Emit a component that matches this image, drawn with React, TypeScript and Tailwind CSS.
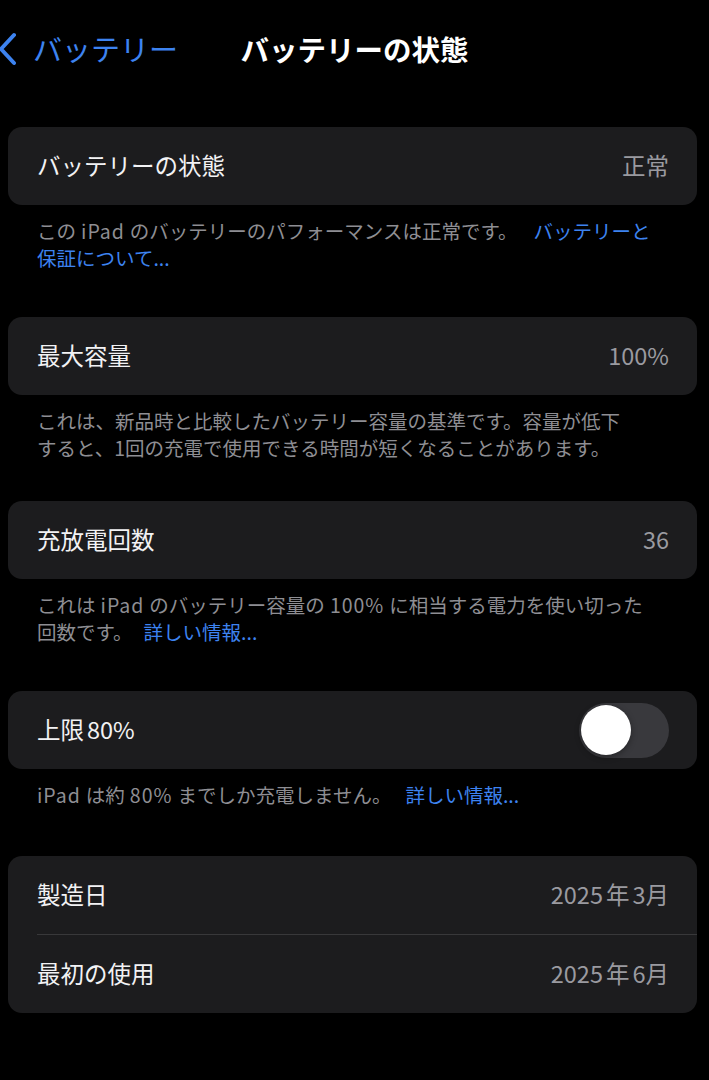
import React from "react";

const font = { fontFamily: '"Noto Sans CJK JP", "Noto Sans", sans-serif' };

function Row({ label, value, children }: { label: React.ReactNode; value?: React.ReactNode; children?: React.ReactNode }) {
  return (
    <div className="flex h-[78px] items-center justify-between pl-[29px] pr-[28px]">
      <span className="text-[23.5px] text-[#f2f2f4]">{label}</span>
      {value && <span className="text-[23.5px] text-[#9a9aa0]">{value}</span>}
      {children}
    </div>
  );
}

function Footer({ children }: { children: React.ReactNode }) {
  return (
    <p className="px-[29px] pt-[13px] text-[19.5px] leading-[26.5px] text-[#8e8e93]">{children}</p>
  );
}

function Link({ children, className = "" }: { children: React.ReactNode; className?: string }) {
  return <span className={"text-[#3d83f0] " + className}>{children}</span>;
}

// latin words inside japanese text get some air, like iOS does
function En({ children }: { children: React.ReactNode }) {
  return <span className="mx-[5px] tracking-[1px]">{children}</span>;
}

function Sm({ children }: { children: React.ReactNode }) {
  return <span className="mx-[3px]">{children}</span>;
}

function Toggle() {
  return (
    <div className="flex h-[55px] w-[90px] items-center rounded-full bg-[#39393d] px-[2px]">
      <div className="h-[50px] w-[50px] rounded-full bg-white shadow-[0_2px_6px_rgba(0,0,0,0.35)]" />
    </div>
  );
}

export default function App() {
  return (
    <div className="min-h-[1080px] w-[709px] bg-black" style={font}>
      {/* Nav bar */}
      <div className="grid h-[98px] grid-cols-[1fr_auto_1fr] items-center">
        <div className="flex items-center gap-[17px]">
          <svg width="19" height="34" viewBox="0 0 19 34" className="-ml-[3px]">
            <path d="M17 3 L4 17 L17 31" fill="none" stroke="#3d83f0" strokeWidth="4" strokeLinecap="round" strokeLinejoin="round" />
          </svg>
          <span className="text-[29px] text-[#3d83f0]">バッテリー</span>
        </div>
        <h1 className="text-[28.5px] font-semibold text-white">バッテリーの状態</h1>
        <div />
      </div>

      <div className="pl-[8px] pr-[12px] pt-[29px]">
        <section className="mb-[46px]">
          <div className="rounded-[14px] bg-[#1c1c1e]">
            <Row label="バッテリーの状態" value="正常" />
          </div>
          <Footer>
            この<En>iPad</En>のバッテリーのパフォーマンスは正常です。<Link className="ml-[16px]">バッテリーと</Link>
            <br />
            <Link>保証について...</Link>
          </Footer>
        </section>

        <section className="mb-[40px]">
          <div className="rounded-[14px] bg-[#1c1c1e]">
            <Row label="最大容量" value="100%" />
          </div>
          <Footer>
            これは、新品時と比較したバッテリー容量の基準です。容量が低下
            <br />
            すると、1回の充電で使用できる時間が短くなることがあります。
          </Footer>
        </section>

        <section className="mb-[46px]">
          <div className="rounded-[14px] bg-[#1c1c1e]">
            <Row label="充放電回数" value="36" />
          </div>
          <Footer>
            これは<En>iPad</En>のバッテリー容量の<En>100%</En>に相当する電力を使い切った
            <br />
            回数です。<Link className="ml-[11px]">詳しい情報...</Link>
          </Footer>
        </section>

        <section className="mb-[47px]">
          <div className="rounded-[14px] bg-[#1c1c1e]">
            <Row label={<>上限<Sm>80%</Sm></>}>
              <Toggle />
            </Row>
          </div>
          <Footer>
            <span className="mr-[5px] tracking-[1px]">iPad</span>は約<En>80%</En>までしか充電しません。
            <Link className="ml-[14px]">詳しい情報...</Link>
          </Footer>
        </section>

        <section>
          <div className="rounded-[14px] bg-[#1c1c1e]">
            <Row label="製造日" value={<>2025<Sm>年</Sm>3月</>} />
            <div className="ml-[29px] h-px bg-[#38383a]" />
            <Row label="最初の使用" value={<>2025<Sm>年</Sm>6月</>} />
          </div>
        </section>
      </div>
    </div>
  );
}
